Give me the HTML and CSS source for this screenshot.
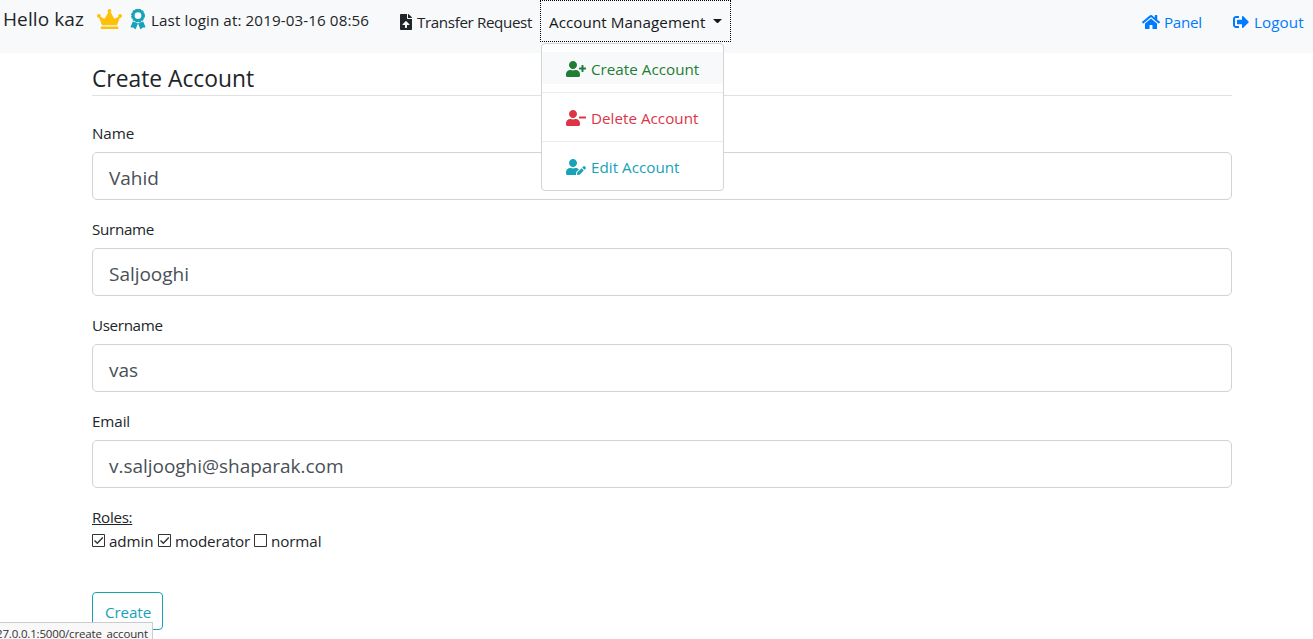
FILE: index.html
```html
<!DOCTYPE html>
<html lang="en">
<head>
<meta charset="utf-8">
<title>Create Account</title>
<link rel="stylesheet" href="styles.css">
</head>
<body>
<svg class="defs" width="0" height="0">
  <symbol id="person" viewBox="0 0 640 512"><path d="M224 256c70.700 0 128-57.300 128-128S294.700 0 224 0 96 57.300 96 128s57.300 128 128 128zm89.600 32h-16.700c-22.200 10.200-46.900 16-72.900 16s-50.600-5.800-72.900-16h-16.700C60.200 288 0 348.200 0 422.400V464c0 26.500 21.500 48 48 48h352c26.500 0 48-21.500 48-48v-41.600c0-74.200-60.200-134.400-134.400-134.400z"/></symbol>
</svg>
<nav class="navbar">
  <div class="greeting">
    <span class="hello">Hello kaz</span>
    <svg class="crown" viewBox="0 0 640 512"><path d="M528 448H112c-8.800 0-16 7.200-16 16v32c0 8.800 7.200 16 16 16h416c8.800 0 16-7.200 16-16v-32c0-8.800-7.200-16-16-16zm64-320c-26.500 0-48 21.500-48 48 0 7.100 1.600 13.700 4.400 19.800L476 239.200c-15.400 9.200-35.300 4-44.200-11.600L350.300 85C361 76.200 368 63 368 48c0-26.500-21.500-48-48-48s-48 21.500-48 48c0 15 7 28.200 17.700 37l-81.500 142.600c-8.900 15.600-28.900 20.800-44.200 11.600l-72.300-43.400c2.700-6 4.400-12.700 4.400-19.800 0-26.500-21.500-48-48-48S0 149.500 0 176s21.500 48 48 48c2.600 0 5.200-.4 7.700-.8L128 416h384l72.300-192.800c2.500.4 5.100.8 7.700.8 26.500 0 48-21.500 48-48s-21.500-48-48-48z"/></svg>
    <svg class="award" viewBox="0 0 384 512"><circle cx="192" cy="168" r="126" fill="none" stroke="currentColor" stroke-width="78"/><circle cx="192" cy="168" r="162" fill="none" stroke="currentColor" stroke-width="30" stroke-dasharray="58 26.800"/><path d="M62 338L3 480c-4 12 4 21 16 21l53-2 39 39c8 7 21 4 25-6l58-143c-12 7-25 5-35-3-14-13-19-14-38-18-20-5-30-12-59-30zM322 338l59 142c4 12-4 21-16 21l-53-2-39 39c-8 7-21 4-25-6l-58-143c12 7 25 5 35-3 14-13 19-14 38-18 20-5 30-12 59-30z" transform="translate(0 -26)"/></svg>
    <span class="login">Last login at: 2019-03-16 08:56</span>
  </div>
  <a class="transfer"><svg class="file" viewBox="0 0 384 512"><path d="M224 136V0H24C10.700 0 0 10.700 0 24v464c0 13.300 10.700 24 24 24h336c13.300 0 24-10.700 24-24V160H248c-13.200 0-24-10.800-24-24zm65.180 216.010H224v80c0 8.840-7.160 16-16 16h-32c-8.840 0-16-7.160-16-16v-80H94.820c-14.280 0-21.410-17.290-11.270-27.360l96.420-95.700c6.650-6.610 17.390-6.610 24.040 0l96.420 95.700c10.150 10.070 3.030 27.360-11.250 27.360zM377 105L279.100 7c-4.500-4.500-10.600-7-17-7H256v128h128v-6.100c0-6.300-2.500-12.400-7-16.900z"/></svg><span class="transfer-text">Transfer Request</span></a>
  <div class="dropdown">
    <a class="toggle"><span class="toggle-text">Account Management</span><i class="caret"></i></a>
    <div class="menu">
      <a class="item active"><svg class="user" viewBox="0 0 640 512"><use href="#person" width="640" height="512"/><path d="M624 208h-64v-64c0-8.800-7.200-16-16-16h-32c-8.800 0-16 7.200-16 16v64h-64c-8.800 0-16 7.200-16 16v32c0 8.800 7.200 16 16 16h64v64c0 8.800 7.200 16 16 16h32c8.800 0 16-7.200 16-16v-64h64c8.800 0 16-7.200 16-16v-32c0-8.800-7.200-16-16-16z"/></svg><span>Create Account</span></a>
      <div class="divider"></div>
      <a class="item danger"><svg class="user" viewBox="0 0 640 512"><use href="#person" width="640" height="512"/><path d="M624 208H432c-8.800 0-16 7.200-16 16v32c0 8.800 7.200 16 16 16h192c8.800 0 16-7.200 16-16v-32c0-8.800-7.200-16-16-16z"/></svg><span>Delete Account</span></a>
      <div class="divider"></div>
      <a class="item info"><svg class="user" viewBox="0 0 640 512"><path d="M224 256c70.700 0 128-57.300 128-128S294.700 0 224 0 96 57.300 96 128s57.300 128 128 128zm89.600 32h-16.700c-22.200 10.200-46.900 16-72.900 16s-50.600-5.800-72.900-16h-16.700C60.200 288 0 348.200 0 422.400V464c0 26.500 21.500 48 48 48h274.900c-2.400-6.800-3.400-14-2.600-21.300l6.800-60.900 1.200-11.100 7.900-7.900 77.300-77.300c-24.500-27.700-60-45.500-99.900-45.500zm45.300 145.300l-6.800 61c-1.100 10.200 7.500 18.800 17.600 17.600l60.900-6.800 137.900-137.900-71.700-71.700-137.900 137.800zM633 268.900L595.100 231c-9.300-9.300-24.500-9.300-33.800 0l-37.800 37.800-4.100 4.100 71.800 71.700 41.800-41.800c9.300-9.400 9.300-24.500 0-33.900z"/></svg><span>Edit Account</span></a>
    </div>
  </div>
  <div class="links">
    <a class="link"><svg class="home" viewBox="0 0 576 512"><path d="M280.370 148.260L96 300.110V464a16 16 0 0 0 16 16l112.060-.29a16 16 0 0 0 15.920-16V368a16 16 0 0 1 16-16h64a16 16 0 0 1 16 16v95.640a16 16 0 0 0 16 16.050L464 480a16 16 0 0 0 16-16V300L295.670 148.260a12.190 12.190 0 0 0-15.300 0zM571.600 251.470L488 182.560V44.050a12 12 0 0 0-12-12h-56a12 12 0 0 0-12 12v72.610L318.470 43a48 48 0 0 0-61 0L4.340 251.470a12 12 0 0 0-1.600 16.900l25.500 31A12 12 0 0 0 45.150 301l235.220-193.740a12.190 12.190 0 0 1 15.300 0L530.900 301a12 12 0 0 0 16.900-1.600l25.500-31a12 12 0 0 0-1.700-16.930z"/></svg><span class="panel-text">Panel</span></a>
    <a class="link"><svg class="exit" viewBox="0 0 512 512"><path d="M497 273L329 441c-15 15-41 4.500-41-17v-96H152c-13.300 0-24-10.700-24-24v-96c0-13.300 10.700-24 24-24h136V88c0-21.400 25.900-32 41-17l168 168c9.300 9.400 9.300 24.600 0 34zM192 436v-40c0-6.600-5.400-12-12-12H96c-17.700 0-32-14.300-32-32V160c0-17.700 14.300-32 32-32h84c6.600 0 12-5.400 12-12V76c0-6.600-5.400-12-12-12H96c-53 0-96 43-96 96v192c0 53 43 96 96 96h84c6.600 0 12-5.400 12-12z"/></svg><span class="logout-text">Logout</span></a>
  </div>
</nav>
<main class="container">
  <h1 class="title">Create Account</h1>
  <form class="form">
    <div class="group"><label class="label">Name</label><div class="field">Vahid</div></div>
    <div class="group"><label class="label surname">Surname</label><div class="field">Saljooghi</div></div>
    <div class="group"><label class="label username">Username</label><div class="field">vas</div></div>
    <div class="group"><label class="label">Email</label><div class="field">v.saljooghi@shaparak.com</div></div>
    <div class="roles-title">Roles:</div>
    <div class="roles">
      <label class="role admin"><svg class="check" viewBox="0 0 13 13"><path d="M.5.500h12v12H.5z"/><path class="tick" d="M2.500 6.500l2.800 2.800 5.500-5.800"/></svg>admin</label>
      <label class="role moderator"><svg class="check" viewBox="0 0 13 13"><path d="M.5.500h12v12H.5z"/><path class="tick" d="M2.500 6.500l2.800 2.800 5.500-5.800"/></svg>moderator</label>
      <label class="role normal"><svg class="check" viewBox="0 0 13 13"><path d="M.5.500h12v12H.5z"/></svg>normal</label>
    </div>
    <div class="submit">Create</div>
  </form>
</main>
<div class="status"><span class="status-text">27.0.0.1:5000/create_account</span></div>
</body>
</html>
```
FILE: styles.css
```css
* { box-sizing: border-box; }
body { margin: 0; height: 639px; overflow: hidden; position: relative; background: #fff; color: #212529; font: 15.2px/24px "Open Sans", "Noto Sans", sans-serif; letter-spacing: -0.1px; white-space: nowrap; }
svg { display: block; fill: currentColor; flex: none; }
.defs { position: absolute; }
.navbar { height: 53px; background: #f8f9fa; display: flex; align-items: flex-start; }
.greeting { display: flex; width: 399px; padding-left: 3px; }
.hello { font-size: 19px; line-height: 38px; width: 94px; letter-spacing: 0.1px; }
.crown { width: 25px; height: 20px; margin: 9px 8px 0 0; color: #ffc107; }
.award { width: 16px; height: 20px; margin: 9px 5px 0 0; color: #17a2b8; overflow: visible; }
.login { line-height: 40px; letter-spacing: 0.1px; }
.transfer { display: flex; width: 142px; line-height: 44px; }
.transfer-text { letter-spacing: -0.38px; }
.file { width: 12px; height: 16px; margin: 14px 5px 0 1px; }
.dropdown { position: relative; width: 191px; }
.toggle { display: flex; height: 42px; margin-left: -1px; border: 1px dotted #000; padding-left: 8px; line-height: 42px; color: #16181b; width: 191px; }
.toggle-text { width: 157px; letter-spacing: 0.07px; }
.caret { margin: 18px 0 0 7px; border: 4.500px solid transparent; border-top-color: currentColor; border-bottom: 0; width: 9px; height: 5px; }
.menu { position: absolute; left: 0; top: 43px; width: 183px; height: 148px; background: #fff; border: 1px solid #d3d4d5; border-radius: 4px; padding-top: 8px; z-index: 2; }
.item { display: flex; height: 32px; line-height: 34px; padding-left: 24px; color: #1e7e34; letter-spacing: 0.02px; }
.active { background: #f8f9fa; }
.danger { color: #dc3545; }
.info { color: #17a2b8; }
.user { width: 20px; height: 16px; margin: 9px 5px 0 0; }
.divider { height: 1px; margin: 8px 0; background: #e9ecef; }
.links { margin-left: auto; display: flex; color: #007bff; line-height: 44px; }
.link { display: flex; }
.link:first-child { width: 91px; }
.link:last-child { width: 80px; }
.panel-text { letter-spacing: -0.3px; }
.logout-text { letter-spacing: 0.1px; }
.home { width: 18px; height: 16px; margin: 14px 4px 0 0; }
.exit { width: 16px; height: 16px; margin: 14px 5px 0 0; }
.container { width: 1140px; margin-left: 92px; }
.title { margin: 0 0 26px; padding-top: 11px; height: 43px; border-bottom: 1px solid #dee2e6; font-weight: 400; font-size: 22.800px; line-height: 29px; letter-spacing: 0; }
.form { margin: 0; }
.group { height: 96px; }
.label { display: block; height: 30px; line-height: 22px; }
.surname { letter-spacing: -0.3px; }
.username { letter-spacing: -0.35px; }
.field { height: 48px; border: 1px solid #ced4da; border-radius: 5px; padding-left: 16px; font-size: 19px; line-height: 50px; color: #495057; letter-spacing: -0.03px; }
.roles-title { height: 24px; line-height: 22px; text-decoration: underline; letter-spacing: -0.3px; }
.roles { display: flex; height: 24px; line-height: 22px; }
.role { display: flex; }
.admin { width: 66px; }
.moderator { width: 96px; letter-spacing: -0.15px; }
.check { width: 13px; height: 13px; margin: 4px 4px 0 0; fill: none; stroke: #333; }
.tick { stroke-width: 1.400; }
.submit { margin-top: 38px; width: 71px; height: 38px; border: 1px solid #17a2b8; border-radius: 4px; color: #17a2b8; line-height: 38px; padding-left: 12px; }
.status { position: absolute; left: 0; bottom: 0; width: 153px; height: 17px; background: #f8f8f8; border-top: 1px solid #ccc; border-right: 1px solid #ccc; font-size: 11.500px; line-height: 21px; color: #333; overflow: hidden; }
.status-text { margin-left: -4px; letter-spacing: -0.17px; }
```
